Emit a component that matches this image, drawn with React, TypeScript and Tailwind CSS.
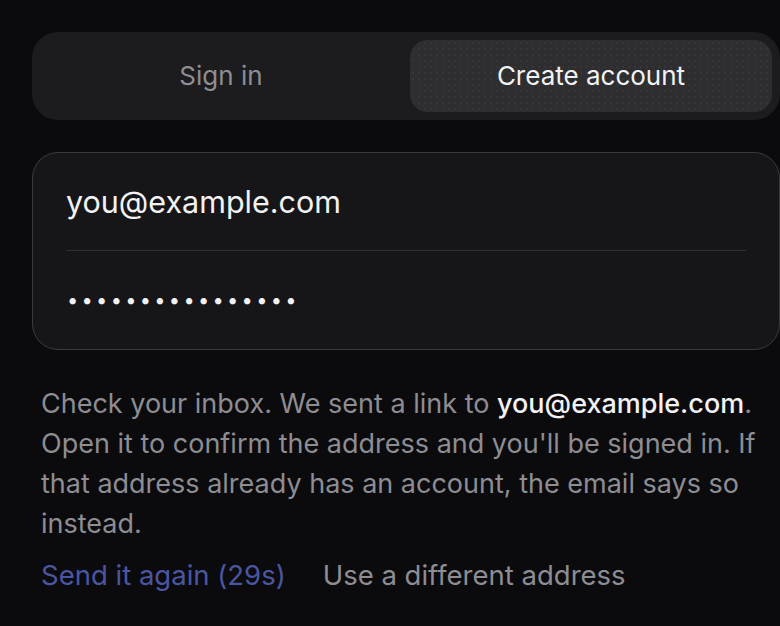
import { useState } from "react";

const App = () => {
  const [tab, setTab] = useState<"signin" | "create">("create");
  const email = "you@example.com";

  return (
    <div
      className="min-h-[626px] w-[780px] overflow-hidden bg-[#0b0b0d] pl-8 pt-8"
      style={{ fontFamily: "Inter, 'Noto Sans', sans-serif" }}
    >
      <div className="w-[748px]">
        {/* tabs */}
        <div className="flex gap-2 rounded-[26px] bg-[#1c1c1e] p-2">
          <button
            type="button"
            onClick={() => setTab("signin")}
            className={
              tab === "signin"
                ? "h-[72px] flex-1 rounded-[18px] bg-[#2e2e30] bg-[radial-gradient(#363638_1px,transparent_1px)] bg-[size:6px_6px] pb-[2px] text-[26px] text-[#f2f2f4]"
                : "h-[72px] flex-1 rounded-[18px] pb-[2px] text-[26px] text-[#8d8d93]"
            }
          >
            Sign in
          </button>
          <button
            type="button"
            onClick={() => setTab("create")}
            className={
              tab === "create"
                ? "h-[72px] flex-1 rounded-[18px] bg-[#2e2e30] bg-[radial-gradient(#363638_1px,transparent_1px)] bg-[size:6px_6px] pb-[2px] text-[26px] text-[#f2f2f4]"
                : "h-[72px] flex-1 rounded-[18px] pb-[2px] text-[26px] text-[#8d8d93]"
            }
          >
            Create account
          </button>
        </div>

        {/* fields */}
        <div className="mt-8 rounded-[26px] border border-[#3b3b3e] bg-[#161618] px-[33px]">
          <div className="flex h-[98px] items-center border-b border-[#2e2e31]">
            <span className="text-[30.5px] text-[#f2f2f4]">{email}</span>
          </div>
          <div className="flex h-[98px] items-center pl-[1px]">
            <span className="text-[20px] tracking-[3.3px] text-[#f2f2f4]">
              {"\u2022".repeat(16)}
            </span>
          </div>
        </div>

        {/* notice */}
        <p className="mt-[34px] pl-[9px] pr-2 text-[27px] leading-[40px] text-[#8d8d93]">
          Check your inbox. We sent a link to{" "}
          <span className="font-medium text-[#f2f2f4]">{email}</span>. Open it
          to confirm the address and you'll be signed in. If that address
          already has an account, the email says so instead.
        </p>

        <div className="mt-[11px] flex gap-[37px] pl-[9px] text-[27.5px] leading-[40px]">
          <button type="button" className="text-[#4b56a3]">
            Send it again (29s)
          </button>
          <button type="button" className="text-[#8d8d93]">
            Use a different address
          </button>
        </div>
      </div>
    </div>
  );
};

export default App;
